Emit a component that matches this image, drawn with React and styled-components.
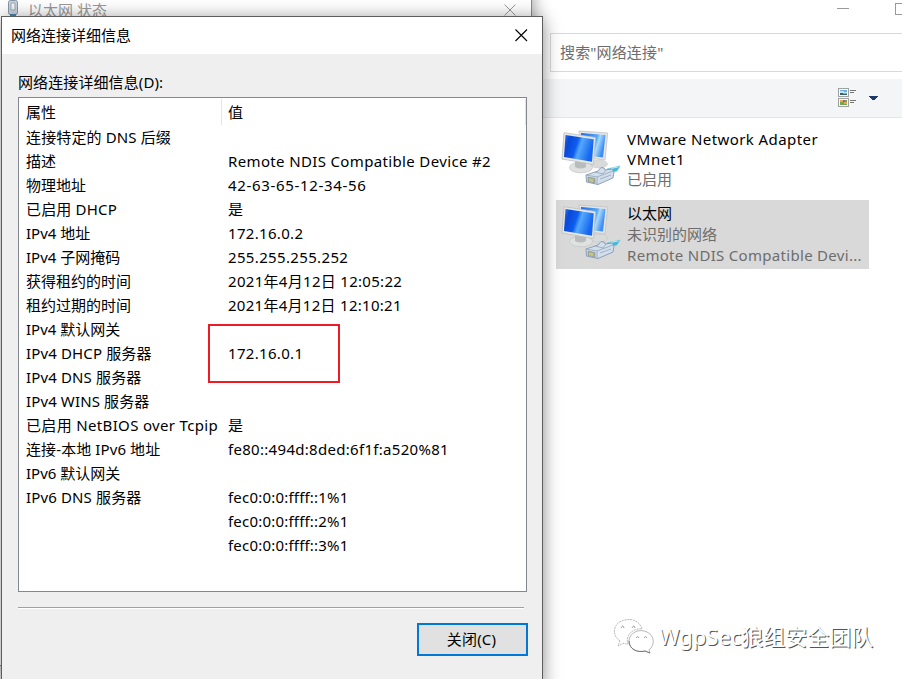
import React from "react";
import styled, { createGlobalStyle } from "styled-components";

const GlobalStyle = createGlobalStyle`
  * { box-sizing: border-box; }
  html, body { margin: 0; width: 902px; height: 679px; overflow: hidden; background: #fff; }
  body { font: 15px/24px "Noto Sans", "Noto Sans CJK SC", sans-serif; color: #000; }
`;

const Desktop = styled.main`
  position: relative;
  width: 902px;
  height: 679px;
  overflow: hidden;
  background: #fff;
`;

/* Explorer window */
const Explorer = styled.section`
  display: flex;
  flex-direction: column;
  width: 902px;
  height: 679px;
  padding-left: 530px;
`;
const CaptionBar = styled.div`
  display: flex;
  justify-content: flex-end;
  height: 33px;
`;
const CaptionIcons = styled.svg`
  width: 72px;
  height: 33px;
  display: block;
`;
const SearchBox = styled.div`
  height: 39px;
  margin-left: 20px;
  padding: 0 9px;
  border: 1px solid #d9d9d9;
  border-right: 0;
  line-height: 37px;
  letter-spacing: 0.15px;
  color: #6d6d6d;
`;
const Toolbar = styled.div`
  display: flex;
  justify-content: flex-end;
  height: 39px;
  margin-top: 7px;
  background: #f4f5f7;
  border-bottom: 1px solid #e5e6e8;
`;
const ViewIcons = styled.svg`
  width: 72px;
  height: 38px;
  display: block;
`;
const Items = styled.div`
  display: flex;
  flex-direction: column;
  gap: 5px;
  padding: 8px 33px 0 26px;
`;
const Item = styled.article`
  display: flex;
  width: 313px;
  height: 69px;
  background: ${(p) => (p.$selected ? "#d9d9d9" : "transparent")};
`;
const ItemIcon = styled.svg`
  flex: none;
  width: 71px;
  height: 69px;
`;
const ItemText = styled.div`
  padding-top: 3px;
  white-space: nowrap;
`;
const ItemLine = styled.div`
  height: ${(p) => p.$h || 21}px;
  line-height: ${(p) => p.$h || 21}px;
  letter-spacing: ${(p) => p.$ls || 0}px;
  color: ${(p) => (p.$muted ? "#6d6d6d" : "#000")};
`;

/* Status window behind the dialog */
const StatusWindow = styled.section`
  position: absolute;
  left: -1px;
  top: -20px;
  width: 533px;
  height: 686px;
  border: 1px solid #8a8a8a;
  background: #fff;
  box-shadow: 0 3px 16px rgba(0, 0, 0, 0.4);
`;
const StatusTitle = styled.header`
  display: flex;
  align-items: center;
  height: 36px;
  margin-top: 11px;
  color: #999;
`;
const StatusIcon = styled.svg`
  width: 28px;
  height: 36px;
`;
const StatusName = styled.span`
  flex: 1;
`;
const StatusClose = styled.svg`
  width: 12px;
  height: 12px;
  margin-right: 15px;
`;

/* Details dialog */
const Dialog = styled.section`
  position: absolute;
  left: 1px;
  top: 16px;
  width: 542px;
  height: 700px;
  border: 1px solid #5d5d5d;
  background: #efefef;
  box-shadow: 0 2px 17px rgba(0, 0, 0, 0.42);
`;
const DialogTitle = styled.header`
  display: flex;
  align-items: center;
  justify-content: space-between;
  height: 37px;
  padding: 0 14px 2px 9px;
  background: #fff;
`;
const CloseIcon = styled.svg`
  width: 13px;
  height: 13px;
  margin-top: 1px;
`;
const DialogBody = styled.div`
  display: flex;
  flex-direction: column;
  padding: 16px 15px 0 16px;
`;
const Label = styled.label`
  height: 27px;
  line-height: 25px;
  letter-spacing: 0.1px;
`;
const ListBox = styled.div`
  width: 509px;
  height: 495px;
  border: 1px solid #828790;
  background: #fff;
`;
const HeaderRow = styled.div`
  display: grid;
  grid-template-columns: 203px 304px;
  height: 27px;
`;
const HeaderCell = styled.div`
  height: 26px;
  margin-top: 1px;
  padding-left: ${(p) => (p.$value ? 6 : 7)}px;
  border-right: 1px solid #e5e5e5;
  line-height: 26px;
`;
const Row = styled.div`
  display: grid;
  grid-template-columns: 203px 304px;
  height: 24px;
  white-space: nowrap;
`;
const Cell = styled.div`
  padding-left: ${(p) => (p.$value ? 6 : 7)}px;
  letter-spacing: ${(p) => p.$ls || 0}px;
`;
const Rule = styled.hr`
  width: 506px;
  height: 2px;
  margin: 15px 0 0;
  border: 0;
  border-top: 1px solid #a0a0a0;
  background: #fff;
`;
const CloseButton = styled.button`
  align-self: flex-end;
  width: 111px;
  height: 33px;
  margin: 14px -1px 0 0;
  padding: 0 2px 2px 0;
  border: 2px solid #0078d7;
  background: #e1e1e1;
  font: inherit;
  letter-spacing: 0.2px;
  color: #000;
`;
const Highlight = styled.div`
  position: absolute;
  left: 208px;
  top: 324px;
  width: 132px;
  height: 59px;
  border: 2px solid #ed1c24;
`;

const Watermark = styled.div`
  position: absolute;
  left: 612px;
  top: 616px;
  display: flex;
  align-items: center;
  gap: 5px;
  height: 40px;
`;
const WatermarkLogo = styled.svg`
  width: 42px;
  height: 38px;
`;
const WatermarkText = styled.span`
  font-size: 22px;
  color: #fff;
  white-space: nowrap;
  text-shadow: 1px 1px 0.5px #555;
`;

const rows = [
  ["连接特定的 DNS 后缀", "", 0.13],
  ["描述", "Remote NDIS Compatible Device #2", 0, 0.355],
  ["物理地址", "42-63-65-12-34-56", 0, 0.67],
  ["已启用 DHCP", "是", 0.18],
  ["IPv4 地址", "172.16.0.2", 0, 0.32],
  ["IPv4 子网掩码", "255.255.255.252", 0, 0.35],
  ["获得租约的时间", "2021年4月12日 12:05:22", 0, 0.3],
  ["租约过期的时间", "2021年4月12日 12:10:21", 0, 0.28],
  ["IPv4 默认网关", ""],
  ["IPv4 DHCP 服务器", "172.16.0.1", 0.14, 0.32],
  ["IPv4 DNS 服务器", "", 0.14],
  ["IPv4 WINS 服务器", "", 0.12],
  ["已启用 NetBIOS over Tcpip", "是", 0.34],
  ["连接-本地 IPv6 地址", "fe80::494d:8ded:6f1f:a520%81", 0.1, 0.3],
  ["IPv6 默认网关", ""],
  ["IPv6 DNS 服务器", "fec0:0:0:ffff::1%1", 0.14, 0.2],
  ["", "fec0:0:0:ffff::2%1", 0, 0.2],
  ["", "fec0:0:0:ffff::3%1", 0, 0.2],
];

function NetworkIcon() {
  return (
    <ItemIcon viewBox="0 0 71 69">
      <defs>
        <linearGradient id="screen" x1="0" y1="0" x2="1" y2="0.3">
          <stop offset="0" stopColor="#2f7be8" />
          <stop offset="0.2" stopColor="#0b48d6" />
          <stop offset="0.48" stopColor="#0d5cf0" />
          <stop offset="0.62" stopColor="#55a9fc" />
          <stop offset="1" stopColor="#1566f0" />
        </linearGradient>
        <linearGradient id="backScreen" x1="0" y1="0" x2="1" y2="0.3">
          <stop offset="0" stopColor="#1a66e4" />
          <stop offset="0.65" stopColor="#55a8f8" />
          <stop offset="0.75" stopColor="#a7dafe" />
          <stop offset="1" stopColor="#3d8df2" />
        </linearGradient>
      </defs>
      <ellipse cx="43" cy="38" rx="8.500" ry="4" fill="#d9dbdb" stroke="#c6c8c8" strokeWidth=".6" />
      <path d="M23 5 51.700 7 49 34 25 31Z" fill="#e4e4e2" stroke="#c1c3c2" strokeWidth=".8" />
      <path d="M25 7 49.500 9 47 31.500 26 29Z" fill="url(#backScreen)" />
      <ellipse cx="25" cy="41.500" rx="11.500" ry="5.300" fill="#e0e1e1" stroke="#c1c3c3" strokeWidth=".7" />
      <path d="M19 34 30 36 30 41q-5 3-11 0Z" fill="#b9bcbc" />
      <path d="M8 6.700 39.500 11.500 37.500 38.500 6 33Z" fill="#e7e7e4" stroke="#bcbfbe" strokeWidth=".8" />
      <path d="M9.500 9 37.700 13.300 36 35.800 8 31Z" fill="url(#screen)" />
      <path d="M51 43 64 40 61 45 54 47Z" fill="#43b7da" stroke="#80c9dd" strokeWidth=".8" />
      <path d="m55 42.500 7-1.500" stroke="#b1edfa" strokeWidth="1.200" />
      <path d="M30 49 42 45 45 41.500 48 42 49 44 56 43 58 46 57 52 42 58.500 30.500 56Z" fill="#d3deeb" stroke="#8399b4" strokeWidth=".9" />
      <path d="m30 49 11 2 16-6M41 51v7M39 46l8 2 3-4M44 53l11-4" fill="none" stroke="#91a5be" strokeWidth=".8" />
      <path d="M32 51 39 52.500v4.500l-7-1.500Z" fill="#aab096" stroke="#7e9198" strokeWidth=".6" />
      <path d="M34 52.500v3m2-2.500v3" stroke="#e0da68" />
    </ItemIcon>
  );
}

export default function App() {
  return (
    <Desktop>
      <GlobalStyle />
      <Explorer>
        <CaptionBar>
          <CaptionIcons viewBox="0 0 72 33" shapeRendering="crispEdges">
            <path d="M7 8.500h12" stroke="#999" />
            <rect x="65.500" y="3.500" width="11" height="11" fill="none" stroke="#999" />
          </CaptionIcons>
        </CaptionBar>
        <SearchBox>搜索"网络连接"</SearchBox>
        <Toolbar>
          <ViewIcons viewBox="0 0 72 38" shapeRendering="crispEdges">
            <g fill="#fff" stroke="#a0a0a0">
              <rect x="8.500" y="9.500" width="10" height="8" />
              <rect x="8.500" y="19.500" width="10" height="8" />
            </g>
            <path fill="#69aee8" d="M10 11h7v5h-7z" />
            <path fill="#c2e4fa" d="M10 12h4v1h3v1h-7z" />
            <path fill="#34665f" d="M10 14h3v1h4v1h-7z" />
            <path fill="#71a750" d="M10 21h7v5h-7z" />
            <path fill="#e9a655" d="M10 21h3v2h-3zM14 23h3v2h-3z" />
            <path fill="#7568b1" d="M13 21h2v2h-2z" />
            <path stroke="#777" d="M20 11.500h6M20 13.500h4M20 21.500h6M20 23.500h4" />
            <path fill="#1c3b6b" d="M39 17h9v1h-1v1h-1v1h-1v1h-3v-1h-1v-1h-1v-1h-1z" />
          </ViewIcons>
        </Toolbar>
        <Items>
          <Item>
            <NetworkIcon />
            <ItemText>
              <ItemLine $h={20} $ls={0.42}>VMware Network Adapter</ItemLine>
              <ItemLine $h={20} $ls={0.65}>VMnet1</ItemLine>
              <ItemLine $muted>已启用</ItemLine>
            </ItemText>
          </Item>
          <Item $selected>
            <NetworkIcon />
            <ItemText>
              <ItemLine>以太网</ItemLine>
              <ItemLine $muted>未识别的网络</ItemLine>
              <ItemLine $muted $ls={0.3}>Remote NDIS Compatible Devi...</ItemLine>
            </ItemText>
          </Item>
        </Items>
      </Explorer>

      <StatusWindow>
        <StatusTitle>
          <StatusIcon viewBox="0 0 28 36">
            <rect x="8.500" y="8.500" width="9" height="14" rx="2" fill="#c9d3dd" stroke="#8496a8" />
            <path d="M11 11h4v7h-4z" fill="#f3f6f8" stroke="#9aa9b6" />
            <path d="M10 22h6v4h-6z" fill="#4a86ab" />
          </StatusIcon>
          <StatusName>以太网 状态</StatusName>
          <StatusClose viewBox="0 0 12 12">
            <path d="m.5.500 11 11m0-11-11 11" stroke="#999" />
          </StatusClose>
        </StatusTitle>
      </StatusWindow>

      <Dialog>
        <DialogTitle>
          <span>网络连接详细信息</span>
          <CloseIcon viewBox="0 0 13 13">
            <path d="m.5.500 11.500 11.500m0-11.500-11.500 11.500" stroke="#000" strokeWidth="1.100" />
          </CloseIcon>
        </DialogTitle>
        <DialogBody>
          <Label>网络连接详细信息(D):</Label>
          <ListBox>
            <HeaderRow>
              <HeaderCell>属性</HeaderCell>
              <HeaderCell $value>值</HeaderCell>
            </HeaderRow>
            {rows.map(([name, value, nameSpacing, valueSpacing], i) => (
              <Row key={i}>
                <Cell $ls={nameSpacing}>{name}</Cell>
                <Cell $value $ls={valueSpacing}>{value}</Cell>
              </Row>
            ))}
          </ListBox>
          <Rule />
          <CloseButton>关闭(C)</CloseButton>
        </DialogBody>
      </Dialog>
      <Highlight />

      <Watermark>
        <WatermarkLogo viewBox="0 0 42 38" fill="#fff" stroke="#999" strokeWidth=".7">
          <path d="M8 24C-1 18 1 5 13 3c8-2 15 2 17 9-10-1-17 7-14 15-2 0-3 0-4-1l-6 3z" strokeDasharray="2 .8" />
          <path d="M37 33c6-5 6-14-2-18-8-4-18 1-18 9 0 8 8 12 16 10l5 2z" />
          <path d="M17 24c0 8 8 12 16 10l5 2" fill="none" stroke="#555" />
          <path d="M9 11q2-4 3 0M20 11q2-4 3 0M24 21q2-3 3 0M32 21q2-3 3 0" fill="none" stroke="#777" />
        </WatermarkLogo>
        <WatermarkText>WgpSec狼组安全团队</WatermarkText>
      </Watermark>
    </Desktop>
  );
}
